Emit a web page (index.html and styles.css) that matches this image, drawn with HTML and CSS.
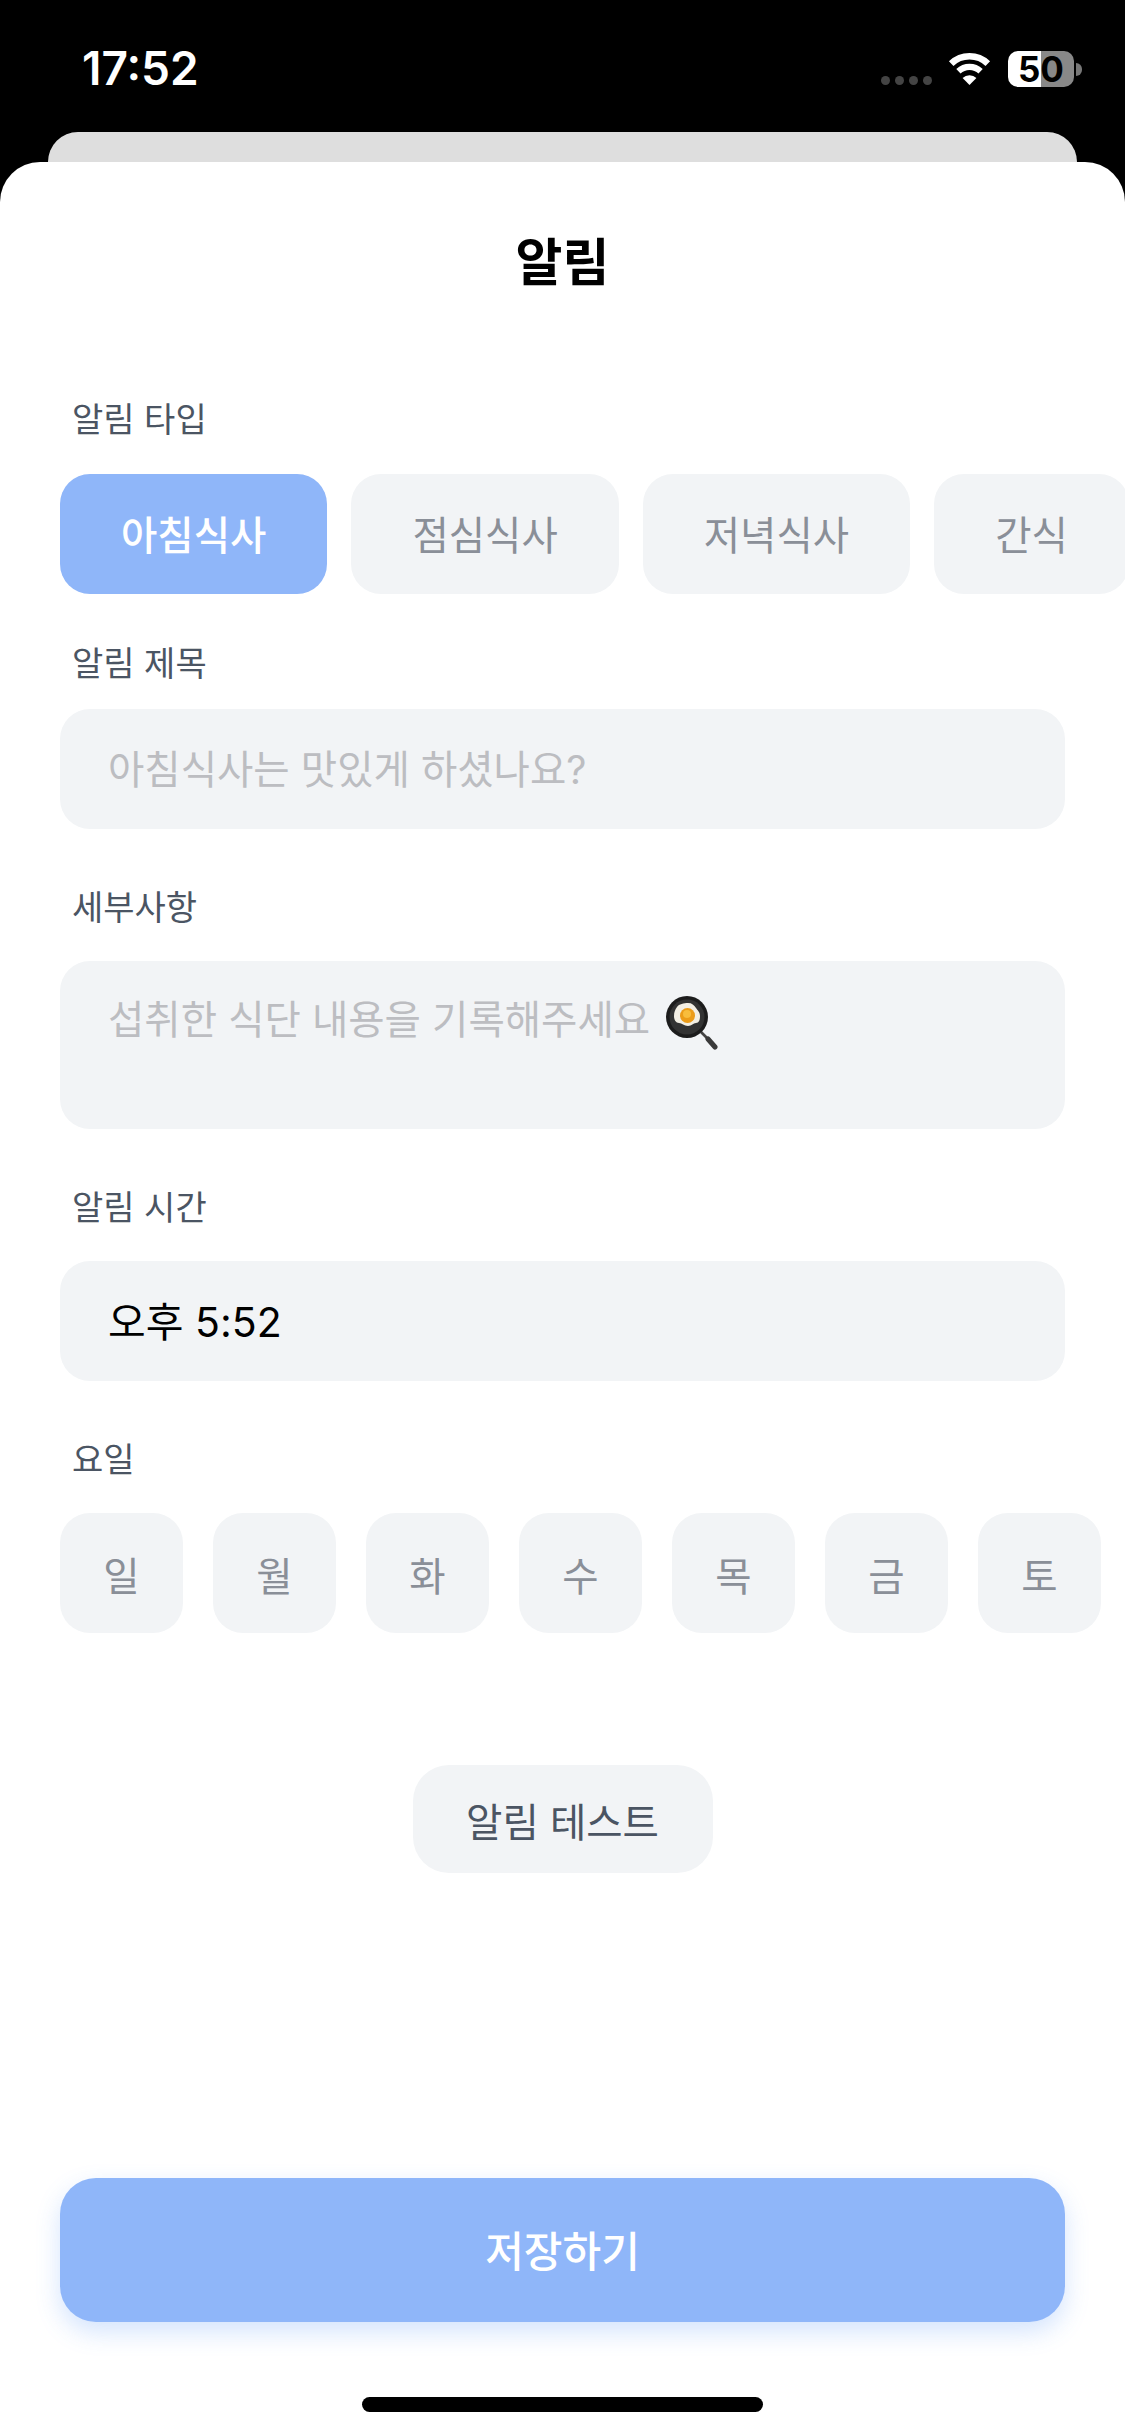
FILE: index.html
```html
<!DOCTYPE html>
<html lang="ko">
<head>
  <meta charset="UTF-8">
  <title>알림</title>
  <link rel="stylesheet" href="styles.css">
</head>
<body>

  <div class="screen">
    <div class="status-bar">
      <span class="clock">17:52</span>
      <div class="status-icons">
        <div class="signal"><i></i><i></i><i></i><i></i></div>
        <svg class="wifi" viewBox="0 0 45 33">
          <path d="M4.2 11.6a26.5 26.5 0 0 1 36.6 0" fill="none" stroke="#fff" stroke-width="6.6"/>
          <path d="M11.4 19.2a16.2 16.2 0 0 1 22.2 0" fill="none" stroke="#fff" stroke-width="6.2"/>
          <path d="M15.6 26.1a10 10 0 0 1 13.8 0L22.5 33z" fill="#fff"/>
        </svg>
        <div class="battery">
          <div class="battery-body">50</div>
          <div class="battery-nub"></div>
        </div>
      </div>
    </div>

    <div class="back-card"></div>

    <div class="sheet">
      <h1 class="title">알림</h1>

      <div class="field field-first">
        <div class="label">알림 타입</div>
        <div class="type-row">
          <button class="chip chip-on">아침식사</button>
          <button class="chip">점심식사</button>
          <button class="chip">저녁식사</button>
          <button class="chip">간식</button>
        </div>
      </div>

      <div class="field">
        <div class="label label-tight">알림 제목</div>
        <div class="input placeholder">아침식사는 맛있게 하셨나요?</div>
      </div>

      <div class="field">
        <div class="label">세부사항</div>
        <div class="input input-area placeholder">
          <span>섭취한 식단 내용을 기록해주세요</span>
          <svg class="pan" viewBox="0 0 54 54">
            <path d="M37 36L45 44" stroke="#444" stroke-width="2.6"/>
            <path d="M44 43L51 51" stroke="#3a3a3a" stroke-width="5" stroke-linecap="round"/>
            <circle cx="23" cy="21" r="21" fill="#1c1c1c"/>
            <circle cx="23" cy="21" r="17.5" fill="#333"/>
            <path d="M24 7c4 0 6 2 8 5s4 4 4 8-1 7-4 7-4 3-8 3-6-3-9-3-5-3-5-7 1-6 3-9 7-4 11-4z" fill="#f3efe4"/>
            <circle cx="23.5" cy="19.5" r="7.5" fill="#ec9c18"/>
            <circle cx="23" cy="18" r="4" fill="#f8bd3c"/>
          </svg>
        </div>
      </div>

      <div class="field">
        <div class="label">알림 시간</div>
        <div class="input time-value">오후 5:52</div>
      </div>

      <div class="field">
        <div class="label">요일</div>
        <div class="day-row">
          <button class="day">일</button>
          <button class="day">월</button>
          <button class="day">화</button>
          <button class="day">수</button>
          <button class="day">목</button>
          <button class="day">금</button>
          <button class="day">토</button>
        </div>
      </div>

      <button class="test-btn">알림 테스트</button>

      <button class="save-btn">저장하기</button>
      <div class="home-bar"></div>
    </div>
  </div>

</body>
</html>
```

FILE: styles.css
```css
* {
  box-sizing: border-box;
}

body {
  margin: 0;
  background: #000;
  font-family: Inter, "Noto Sans CJK KR", sans-serif;
}

button {
  font-family: inherit;
  border: none;
}

.screen {
  width: 1125px;
  height: 2436px;
  background: #000;
  display: flex;
  flex-direction: column;
  overflow: hidden;
}

.status-bar {
  height: 132px;
  padding: 43px 43px 0 82px;
  display: flex;
  justify-content: space-between;
  align-items: flex-start;
  color: #fff;
}

.clock {
  font-size: 46px;
  line-height: 50px;
  font-weight: 600;
}

.status-icons {
  display: flex;
  align-items: flex-start;
  margin-top: 8px;
}

.signal {
  display: flex;
  gap: 5px;
  margin-top: 25px;
  margin-right: 15px;
}

.signal i {
  width: 9px;
  height: 9px;
  border-radius: 50%;
  background: #444;
}

.wifi {
  width: 45px;
  height: 33px;
  margin-top: 1px;
  margin-right: 16px;
}

.battery {
  display: flex;
  align-items: center;
}

.battery-body {
  width: 66px;
  height: 36px;
  border-radius: 10px;
  background: linear-gradient(90deg, #fff 50%, #888 50%);
  color: #000;
  font-size: 35px;
  font-weight: 700;
  line-height: 36px;
  text-align: center;
}

.battery-nub {
  width: 6px;
  height: 13px;
  margin-left: 2px;
  border-radius: 0 6px 6px 0;
  background: #777;
}

.back-card {
  height: 30px;
  margin: 0 48px;
  background: #dedede;
  border-radius: 30px 30px 0 0;
}

.sheet {
  flex: 1;
  background: #fff;
  border-radius: 40px 40px 0 0;
  padding: 71px 60px 24px;
  display: flex;
  flex-direction: column;
}

.title {
  margin: 0 0 103px;
  font-size: 51px;
  line-height: 60px;
  font-weight: 600;
  text-align: center;
  color: #000;
}

.field {
  margin-bottom: 55px;
}

.field-first {
  margin-bottom: 46px;
}

.label {
  margin: 0 0 29px 12px;
  font-size: 34px;
  line-height: 48px;
  color: #4b5563;
}

.field-first .label {
  margin-bottom: 30px;
}

.label-tight {
  margin-bottom: 21px;
}

.type-row {
  display: flex;
  gap: 24px;
  margin-right: -60px;
}

.chip {
  flex-shrink: 0;
  height: 120px;
  padding: 0 61px 3px;
  border-radius: 30px;
  background: #f2f4f6;
  color: #8a8f98;
  font-size: 39.5px;
  font-weight: 400;
}

.chip-on {
  background: #8fb6f9;
  color: #fff;
  font-weight: 500;
}

.input {
  height: 120px;
  padding: 0 48px 5px;
  display: flex;
  align-items: center;
  border-radius: 30px;
  background: #f2f4f6;
  font-size: 39.5px;
}

.placeholder {
  color: #bcbdc1;
}

.input-area {
  height: 168px;
  padding-top: 32px;
  align-items: flex-start;
  line-height: 54px;
}

.pan {
  width: 54px;
  height: 54px;
  margin: 3px 0 0 14px;
}

.time-value {
  color: #000;
  font-size: 41px;
}

.day-row {
  display: flex;
  gap: 30px;
}

.day {
  flex-shrink: 0;
  width: 123px;
  height: 120px;
  border-radius: 30px;
  background: #f2f4f6;
  color: #8a8f98;
  font-size: 39.5px;
}

.test-btn {
  align-self: center;
  width: 300px;
  height: 108px;
  margin-top: 77px;
  border-radius: 36px;
  background: #f2f4f6;
  color: #4b5563;
  font-size: 39.5px;
}

.save-btn {
  height: 144px;
  margin-top: auto;
  padding-bottom: 5px;
  border-radius: 36px;
  background: #8fb6f9;
  color: #fff;
  font-size: 42px;
  font-weight: 500;
  box-shadow: 0 10px 24px rgba(59, 130, 246, 0.22);
}

.home-bar {
  width: 401px;
  height: 15px;
  margin: 75px auto 0;
  border-radius: 8px;
  background: #000;
}
```
